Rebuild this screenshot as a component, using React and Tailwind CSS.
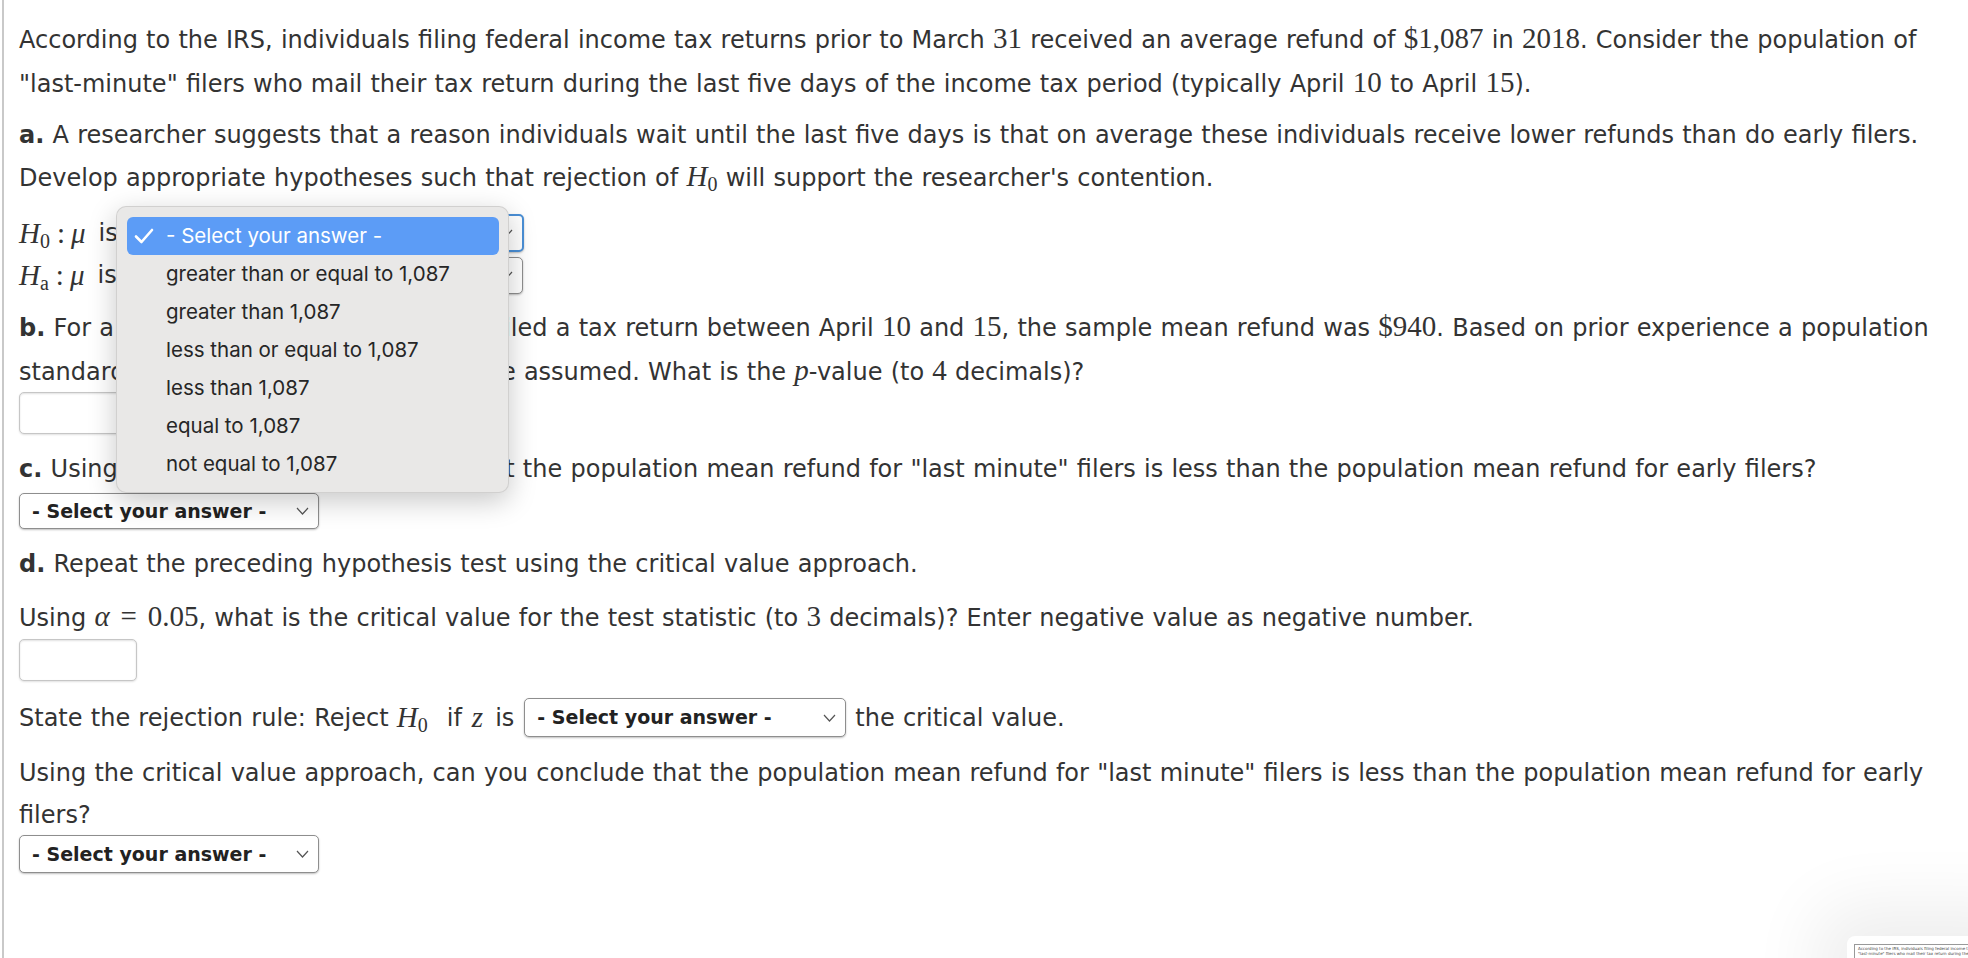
import React from "react";

function M({ children }) {
  return <span className="font-['Liberation_Serif',serif] text-[29px] leading-none [word-spacing:0]">{children}</span>;
}

// relation sign with KaTeX-like thick spacing
function Eq() {
  return <span className="mx-[8px] inline-block w-[22px] text-center">=</span>;
}

function H0() {
  return (
    <M>
      <i>H</i>
      <sub className="text-[20px]">0</sub>
    </M>
  );
}

function Chevron() {
  return (
    <svg width="13" height="8" viewBox="0 0 13 8" className="shrink-0">
      <polyline points="1,1 6.5,7 12,1" fill="none" stroke="#555" strokeWidth="1.2" />
    </svg>
  );
}

function Select({ className, focus }) {
  return (
    <span
      className={
        "inline-flex shrink-0 items-center justify-between rounded-[5px] bg-white pl-[12px] pr-[9px] shadow-[0_1px_2px_rgba(0,0,0,0.25)] [word-spacing:0] " +
        (focus ? "border-2 border-[#4a8fd6]" : "border border-[#8e8e8e]") +
        " " +
        className
      }
    >
      <span className="text-[19px] font-bold leading-none text-[#222]">- Select your answer -</span>
      <Chevron />
    </span>
  );
}

function Input() {
  return (
    <div className="h-[42px] w-[118px] rounded-[5px] border border-[#c6c6c6] bg-white shadow-[inset_0_1px_2px_rgba(0,0,0,0.12),0_1px_2px_rgba(0,0,0,0.12)]" />
  );
}

const options = [
  "greater than or equal to 1,087",
  "greater than 1,087",
  "less than or equal to 1,087",
  "less than 1,087",
  "equal to 1,087",
  "not equal to 1,087",
];

export default function App() {
  return (
    <div className="relative h-[958px] overflow-hidden bg-white font-['DejaVu_Sans',Verdana,sans-serif] text-[24px] text-[#333] [word-spacing:0.6px]">
      <div className="ml-[2px] h-full border-l-2 border-[#c9c9c9] pl-[15px] pr-[20px] pt-[18px]">
        <p className="leading-[44px]">
          According to the IRS, individuals filing federal income tax returns prior to March <M>31</M> received an
          average refund of <M>$1,087</M> in <M>2018</M>. Consider the population of "last-minute" filers who mail
          their tax return during the last five days of the income tax period (typically April <M>10</M> to April{" "}
          <M>15</M>).
        </p>

        <p className="mt-[8px] leading-[43px]">
          <b>a.</b> A researcher suggests that a reason individuals wait until the last five days is that on average
          these individuals receive lower refunds than do early filers. Develop appropriate hypotheses such that
          rejection of <H0 /> will support the researcher's contention.
        </p>

        <div className="mt-[12px] flex h-[42px] items-center">
          <M>
            <i>H</i>
            <sub className="text-[20px]">0</sub>
            <span className="ml-[7px] mr-[6px]">:</span>
            <i>μ</i>
          </M>
          <span className="ml-[13px] mr-[8px]">is</span>
          <Select focus className="h-[38px] w-[398px]" />
        </div>
        <div className="flex h-[42px] items-center">
          <M>
            <i>H</i>
            <sub className="text-[20px]">a</sub>
            <span className="ml-[7px] mr-[6px]">:</span>
            <i>μ</i>
          </M>
          <span className="ml-[13px] mr-[8px]">is</span>
          <Select className="h-[37px] w-[398px]" />
        </div>

        <p className="mt-[10px] leading-[44px]">
          <b>b.</b> For a sample of <M>400</M> individuals who filed a tax return between April <M>10</M> and{" "}
          <M>15</M>, the sample mean refund was <M>$940</M>. Based on prior experience a population standard
          deviation of{" "}
          <M>
            <i>σ</i>
            <Eq />
            $1,600
          </M>{" "}
          may be assumed. What is the{" "}
          <M>
            <i>p</i>
          </M>
          -value (to <M>4</M> decimals)?
        </p>
        <div className="-mt-[2px]">
          <Input />
        </div>

        <p className="mt-[14px] leading-[43px]">
          <b>c.</b> Using{" "}
          <M>
            <i>α</i>
            <Eq />
            0.05
          </M>
          , can you conclude that the population mean refund for "last minute" filers is less than the population
          mean refund for early filers?
        </p>
        <div className="mt-[2px] flex">
          <Select className="h-[36px] w-[300px]" />
        </div>

        <p className="mt-[13px] leading-[44px]">
          <b>d.</b> Repeat the preceding hypothesis test using the critical value approach.
        </p>
        <p className="mt-[10px] leading-[44px]">
          Using{" "}
          <M>
            <i>α</i>
            <Eq />
            0.05
          </M>
          , what is the critical value for the test statistic (to <M>3</M> decimals)? Enter negative value as
          negative number.
        </p>
        <div className="-mt-[1px]">
          <Input />
        </div>

        <div className="mt-[15px] flex h-[43px] items-center">
          <span>State the rejection rule: Reject&nbsp;</span>
          <H0 />
          <span className="ml-[19px] mr-[10px]">if</span>
          <M>
            <i>z</i>
          </M>
          <span className="ml-[12px] mr-[10px]">is</span>
          <Select className="h-[39px] w-[322px]" />
          <span className="ml-[9px]">the critical value.</span>
        </div>

        <p className="mt-[13px] leading-[42px]">
          Using the critical value approach, can you conclude that the population mean refund for "last minute"
          filers is less than the population mean refund for early filers?
        </p>
        <div className="-mt-[1px] flex">
          <Select className="h-[38px] w-[300px]" />
        </div>
      </div>

      {/* open native select menu */}
      <div className="absolute left-[116px] top-[206px] w-[393px] rounded-[10px] border border-black/10 bg-[#e9e8e7] pb-[9px] pl-[10px] pr-[9px] pt-[10px] font-['Inter',sans-serif] text-[20.5px] text-[#262626] shadow-[0_8px_28px_rgba(0,0,0,0.22)] [word-spacing:0]">
        <div className="flex h-[38px] items-center rounded-[6px] bg-[#5c9cf6] text-white">
          <svg width="20" height="16" viewBox="0 0 20 16" className="ml-[7px] mr-[12px]">
            <polyline points="2,8.5 7.5,14 18,2" fill="none" stroke="white" strokeWidth="2.6" strokeLinecap="round" strokeLinejoin="round" />
          </svg>
          <span>- Select your answer -</span>
        </div>
        {options.map((o) => (
          <div key={o} className="flex h-[38px] items-center pl-[39px]">
            {o}
          </div>
        ))}
      </div>

      {/* screenshot thumbnail */}
      <div className="absolute left-[1847px] top-[936px] h-[60px] w-[160px] rounded-[8px] bg-white pl-[7px] pt-[8px] shadow-[0_0_70px_30px_rgba(0,0,0,0.07)] [word-spacing:0]">
        <div className="h-full border border-[#999] px-[3px] pt-[1px] text-[4px] leading-[5px] text-[#444]">
          <div className="whitespace-nowrap">According to the IRS, individuals filing federal income tax returns</div>
          <div className="whitespace-nowrap">"last-minute" filers who mail their tax return during the last five</div>
        </div>
      </div>
    </div>
  );
}
